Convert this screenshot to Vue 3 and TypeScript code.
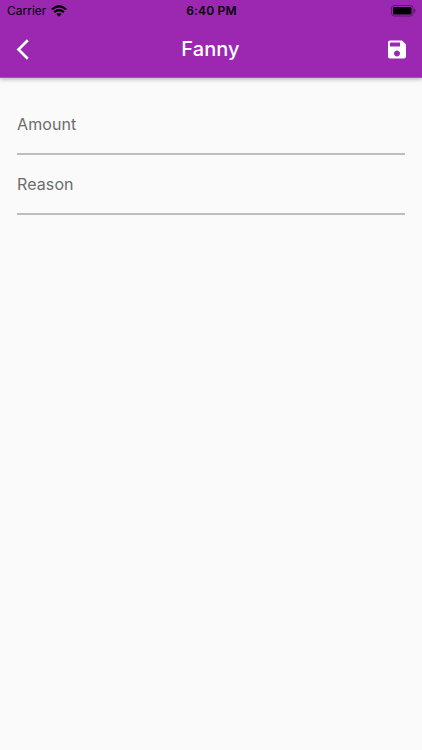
<script setup lang="ts">
const title: string = 'Fanny'
const time: string = '6:40 PM'
const fields: string[] = ['Amount', 'Reason']
</script>

<template>
  <main class="screen">
    <header class="app-bar">
      <div class="status">
        <div class="carrier">
          <span>Carrier</span>
          <svg class="wifi" width="16" height="12" viewBox="0 0 16 12">
            <g fill="none" stroke="#000" stroke-width="2.2">
              <path d="M.8 4.500Q8-2 15.200 4.500" />
              <path d="M3.200 7.200Q8 3 12.800 7.200" />
            </g>
            <path d="M5.300 9.100Q8 6.900 10.700 9.100L8 11.700Z" />
          </svg>
        </div>
        <span class="time">{{ time }}</span>
        <svg class="battery" width="25" height="12" viewBox="0 0 25 12">
          <rect x=".5" y=".5" width="21.500" height="10.500" rx="2.600" fill="none" stroke="#000" stroke-opacity=".4" />
          <rect x="2" y="2" width="18.500" height="7.500" rx="1.200" />
          <path d="M23.200 3.800Q24.500 4.400 24.500 5.800T23.200 7.800Z" fill-opacity=".5" />
        </svg>
      </div>
      <div class="toolbar">
        <svg class="back" width="24" height="24" viewBox="0 0 24 24">
          <path d="M16.800 3.300L7.500 12.500l9.300 9.200" fill="none" stroke="#fff" stroke-width="2.700" />
        </svg>
        <h1>{{ title }}</h1>
        <svg class="save" width="24" height="24" viewBox="0 0 24 24">
          <path transform="translate(0 .4)" fill="#fff" d="M17 3H5c-1.110 0-2 .9-2 2v14c0 1.100.89 2 2 2h14c1.100 0 2-.9 2-2V7l-4-4zm-5 16c-1.660 0-3-1.340-3-3s1.340-3 3-3 3 1.340 3 3-1.340 3-3 3zm3-10H5V5h10v4z" />
        </svg>
      </div>
    </header>
    <form class="form">
      <div v-for="field in fields" :key="field" class="field">{{ field }}</div>
    </form>
  </main>
</template>

<style>
body { margin: 0; }
</style>

<style scoped>
.screen { height: 750px; overflow: hidden; background: #fafafa; font-family: Inter, sans-serif; }
.app-bar { height: 77px; border-bottom: 1px solid #ab4dbb; box-sizing: content-box; background: #9c27b0; box-shadow: 0 1px 4px rgba(0,0,0,.24), 0 1px 6px rgba(0,0,0,.1); }
.status { height: 21px; padding: 0 6px 0 7px; display: grid; grid-template-columns: 1fr auto 1fr; align-items: center; font-size: 12px; color: #000; }
.carrier { display: flex; align-items: center; gap: 5px; letter-spacing: 0; }
.time { font-weight: 600; letter-spacing: .2px; }
.battery { justify-self: end; }
.toolbar { height: 55px; padding: 0 13px 0 11px; display: grid; grid-template-columns: 1fr auto 1fr; align-items: center; }
h1 { margin: 0; padding-left: 1px; color: #fff; font-size: 20px; font-weight: 500; letter-spacing: .1px; }
.save { justify-self: end; }
.form { padding: 17px 17px 0; }
.field { height: 58px; border-bottom: 2px solid #bdbdbd; display: flex; align-items: center; color: #6c6c6c; font-size: 16px; letter-spacing: .1px; }
</style>
